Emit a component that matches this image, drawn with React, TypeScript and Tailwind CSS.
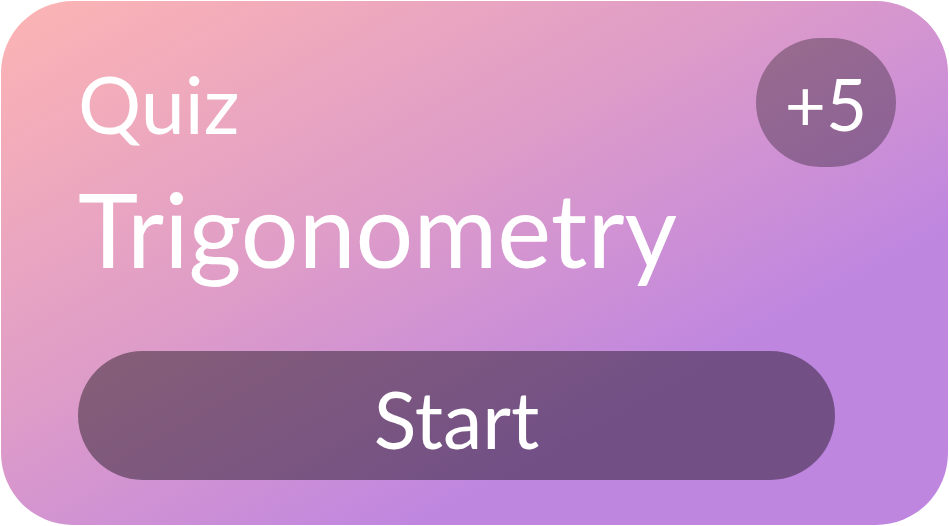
import React from "react";

export default function App() {
  return (
    <div className="w-[949px] h-[526px] bg-white p-[1px]" style={{ fontFamily: 'Lato, "Noto Sans", sans-serif' }}>
      <div className="w-full h-full rounded-[72px] bg-[linear-gradient(to_bottom_right,#fdb5b3_0%,#de9cc8_40%,#bf86e0_72%,#bf86e0_100%)] flex flex-col pl-[77px] pr-[52px] pt-[37px] text-white">
        <div className="flex justify-between items-start">
          <div className="mt-[26px] text-[79px] leading-none">Quiz</div>
          <div className="w-[140px] h-[129px] rounded-full bg-black/30 flex items-center justify-center text-[71px] leading-none pt-[2px]">+5</div>
        </div>
        <div className="mt-[11px] text-[102px] leading-none">Trigonometry</div>
        <div className="mt-[71px] w-[757px] h-[129px] rounded-full bg-black/40 flex items-center justify-center text-[79px] leading-none pt-[6px]">Start</div>
      </div>
    </div>
  );
}
